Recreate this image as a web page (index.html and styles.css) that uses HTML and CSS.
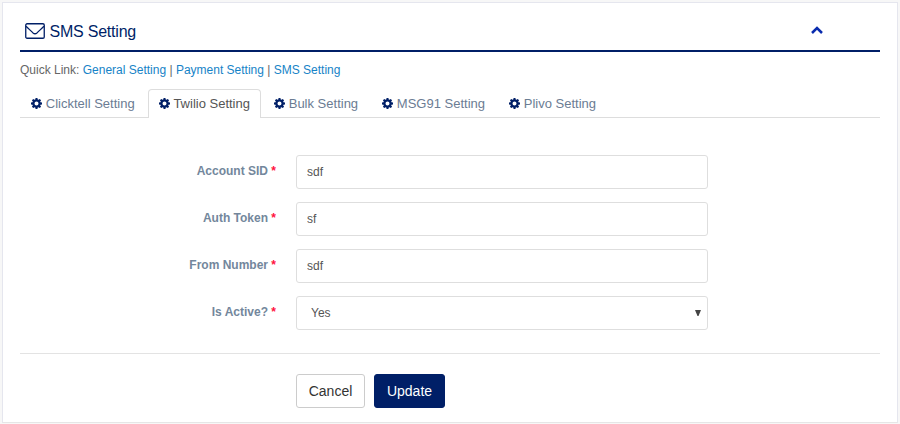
FILE: index.html
```
<!DOCTYPE html>
<html lang="en">
<head>
<meta charset="utf-8">
<title>SMS Setting</title>
<link rel="stylesheet" href="styles.css">
</head>
<body>
<svg width="0" height="0" class="defs" aria-hidden="true">
  <symbol id="cog" viewBox="0 0 11 11"><path fill-rule="evenodd" d="M4.600 0h1.800l.35 1.500.7.300L8.700.9l1.400 1.400-.9 1.250.3.700 1.500.35v1.800l-1.500.35-.3.700.9 1.250-1.400 1.400-1.250-.9-.7.300L6.400 11H4.600l-.35-1.500-.7-.3-1.250.9L.9 8.700l.9-1.250-.3-.7L0 6.400V4.600l1.500-.35.300-.7L.9 2.300 2.300.9l1.250.9.700-.3zM5.500 3.500a2 2 0 1 0 0 4 2 2 0 1 0 0-4z"/></symbol>
</svg>
<main class="panel">
  <header class="title-bar">
    <svg class="mail" viewBox="0 0 20 16"><rect x=".75" y=".75" width="18.500" height="14.500" rx="1.300"/><path d="M1 3.200C3.500 5.800 6 7.800 8 9.900q2 1.700 4 0C14 7.800 16.500 5.800 19 3.200"/></svg>
    <h1>SMS Setting</h1>
    <svg class="chevron" viewBox="0 0 12 8"><path d="M1 7 6 2l5 5"/></svg>
  </header>
  <p class="quick">Quick Link: <a>General Setting</a> | <a>Payment Setting</a> | <a>SMS Setting</a></p>
  <nav class="tabs">
    <a class="tab"><svg class="cog"><use href="#cog"/></svg>Clicktell Setting</a>
    <a class="tab active"><svg class="cog"><use href="#cog"/></svg>Twilio Setting</a>
    <a class="tab"><svg class="cog"><use href="#cog"/></svg>Bulk Setting</a>
    <a class="tab"><svg class="cog"><use href="#cog"/></svg>MSG91 Setting</a>
    <a class="tab"><svg class="cog"><use href="#cog"/></svg>Plivo Setting</a>
  </nav>
  <form>
    <div class="row"><label for="sid">Account SID <span>*</span></label><input id="sid" value="sdf"></div>
    <div class="row"><label for="token">Auth Token <span>*</span></label><input id="token" value="sf"></div>
    <div class="row"><label for="from">From Number <span>*</span></label><input id="from" value="sdf"></div>
    <div class="row"><label>Is Active? <span>*</span></label><div class="select">Yes<svg class="arrow" viewBox="0 0 6 6"><path d="M0 0h6L3.500 6h-1z"/></svg></div></div>
    <div class="actions"><button type="button">Cancel</button><button type="button" class="primary">Update</button></div>
  </form>
</main>
</body>
</html>
```
FILE: styles.css
```
* { box-sizing: border-box; }
body {
  margin: 0;
  padding: 2px;
  background: #f7f7f7;
  font: 12px/18px "Liberation Sans", Arial, sans-serif;
  color: #5f6773;
}
.defs { display: none; }
.panel {
  height: 421px;
  padding: 8px 17px 0;
  background: #fff;
  border: 1px solid #e6e9ed;
  border-color: #e5e6ee #e5e6ee #e6e6e6;
}
.title-bar {
  display: flex;
  align-items: center;
  height: 41px;
  padding: 0 57px 0 5px;
  border-bottom: 2px solid #001f67;
}
h1 {
  flex: 1;
  margin: 2px 0 0 4.500px;
  font-size: 16px;
  font-weight: 400;
  line-height: 20px;
  letter-spacing: -.22px;
  color: #001f67;
}
.mail { width: 20px; height: 16px; fill: none; stroke: #001f67; stroke-width: 1.3; }
.chevron { width: 12px; height: 8px; margin-bottom: 2px; fill: none; stroke: #0a2cae; stroke-width: 2.500; }
.quick { margin: 9px 0 10px; color: #666; }
.quick a { color: #1683c7; }
.tabs {
  display: flex;
  gap: 2px;
  height: 29px;
  border-bottom: 1px solid #ddd;
}
.tab {
  display: flex;
  align-items: center;
  height: 29px;
  padding: 0 10px;
  border: 1px solid transparent;
  border-bottom: 0;
  border-radius: 4px 4px 0 0;
  font-size: 13px;
  color: #6b7c93;
}
.tab.active { background: #fff; border-color: #ddd; color: #555; }
.cog { width: 11px; height: 11px; margin: 0 3.750px 1px 0; fill: #001f67; }
form { padding-top: 37px; }
.row { display: grid; grid-template-columns: 256px 412px; column-gap: 20px; margin-bottom: 13px; }
label { padding-top: 7px; text-align: right; font-weight: 700; color: #73879c; }
label span { color: #ff1040; }
input, .select {
  width: 412px;
  height: 34px;
  padding: 0 10px;
  border: 1px solid #dedede;
  border-radius: 3px;
  background: #fff;
  font: 12px/32px "Liberation Sans", Arial, sans-serif;
  color: #555;
}
.select { display: flex; align-items: center; justify-content: space-between; padding: 0 6px 0 14px; }
.arrow { width: 6px; height: 6px; fill: #444; }
.actions {
  display: flex;
  gap: 9px;
  margin-top: 23px;
  padding: 20px 0 0 276px;
  border-top: 1px solid #e3e3e3;
}
button {
  width: 69px;
  height: 34px;
  padding: 0;
  border: 1px solid #ccc;
  border-radius: 3px;
  background: #fff;
  font: 14px/20px "Liberation Sans", Arial, sans-serif;
  color: #333;
}
.primary { width: 71px; background: #001f67; border-color: #001f67; color: #fff; }
```
